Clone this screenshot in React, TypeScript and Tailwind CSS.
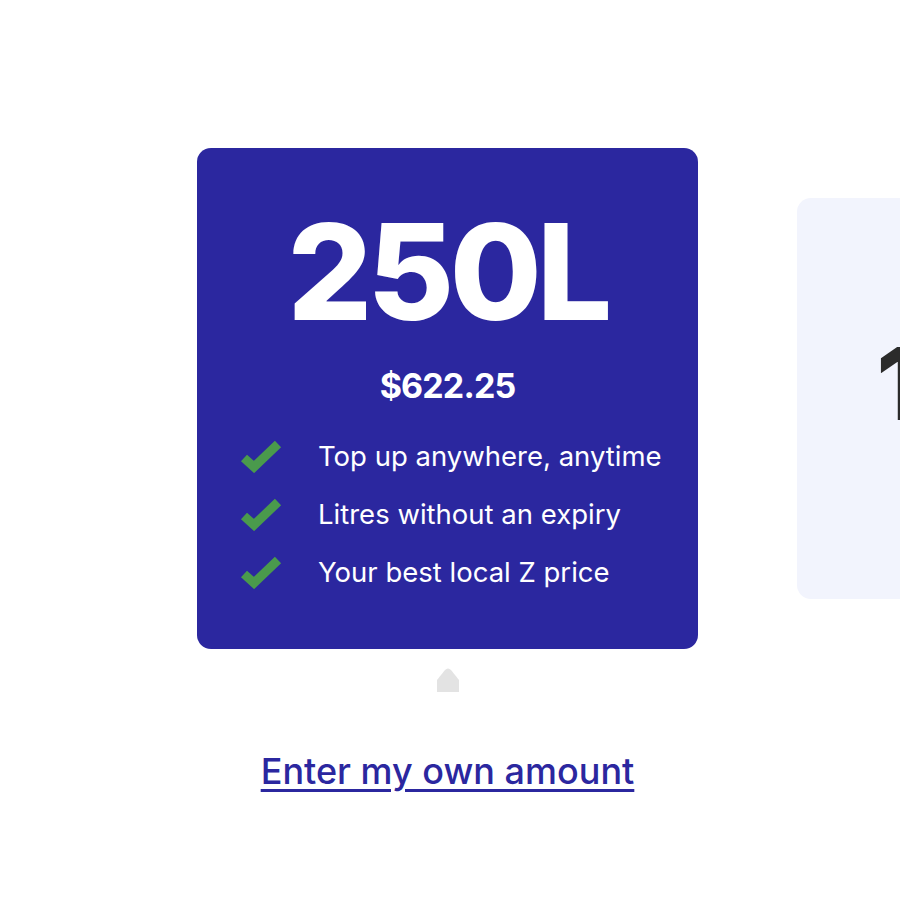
import React from 'react';

const features = [
  'Top up anywhere, anytime',
  'Litres without an expiry',
  'Your best local Z price',
];

function Check() {
  return (
    <svg width="42" height="34" viewBox="0 0 42 34" className="shrink-0">
      <polyline
        points="4,19 14,28 38,5"
        fill="none"
        stroke="#4a9a4c"
        strokeWidth="9"
        strokeLinecap="butt"
        strokeLinejoin="miter"
      />
    </svg>
  );
}

export default function App() {
  return (
    <div className="w-[900px] h-[900px] bg-white overflow-hidden font-['Inter',sans-serif]">
      {/* carousel track */}
      <div className="flex items-center gap-[99px] pl-[197px] pt-[148px]">
        <div className="w-[501px] h-[501px] shrink-0 rounded-[14px] bg-[#2b279f] text-white flex flex-col items-center pt-[57px]">
          <div className="text-[133px] leading-none font-extrabold tracking-[-0.035em]">250L</div>
          <div className="mt-[31px] text-[34px] leading-none font-bold tracking-tight">$622.25</div>
          <ul className="mt-[35px] self-start pl-[43px] flex flex-col gap-[22px]">
            {features.map((f) => (
              <li key={f} className="flex items-center gap-[36px]">
                <Check />
                <span className="text-[27.5px] leading-[36px] font-normal">{f}</span>
              </li>
            ))}
          </ul>
        </div>
        <div className="w-[401px] h-[401px] shrink-0 rounded-[14px] bg-[#f2f4fd] text-[#2b2b2b] flex flex-col items-center pt-[136px] pr-[17px]">
          <div className="text-[100px] leading-none font-extrabold tracking-[-0.035em]">100L</div>
          <div className="mt-[24px] text-[27px] leading-none font-bold">$248.90</div>
        </div>
      </div>

      {/* active slide marker */}
      <div className="flex justify-center pr-[5px] mt-[19px]">
        <svg width="22" height="24" viewBox="0 0 22 24">
          <path d="M0 24 V12 L8 2 Q11 -1 14 2 L22 12 V24 Z" fill="#e3e3e3" />
        </svg>
      </div>

      <div className="flex justify-center mt-[61px] pr-[5px]">
        <a
          href="#"
          className="text-[36px] leading-none font-medium text-[#2b279f] underline decoration-[3px] underline-offset-[5px]"
        >
          Enter my own amount
        </a>
      </div>
    </div>
  );
}
